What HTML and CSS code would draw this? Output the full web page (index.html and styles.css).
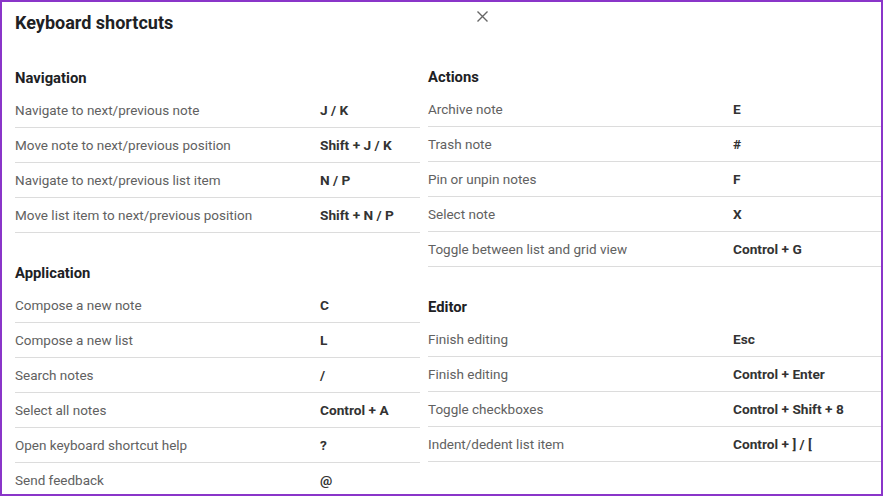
FILE: index.html
```html
<!DOCTYPE html>
<html lang="en">
<head>
<meta charset="utf-8">
<title>Keyboard shortcuts</title>
<link rel="stylesheet" href="styles.css">
</head>
<body>
<div class="frame">
  <header class="top">
    <h1 class="title">Keyboard shortcuts</h1>
    <button class="close" aria-label="Close">
      <svg width="11" height="11" viewBox="0 0 11 11"><path d="M0.5 0.5L10.5 10.5M10.5 0.5L0.5 10.5" stroke="#666" stroke-width="1.4" fill="none"/></svg>
    </button>
  </header>
  <div class="cols">
    <div class="col left">
      <section class="group">
        <h2 class="gh">Navigation</h2>
        <div class="row"><span class="lbl">Navigate to next/previous note</span><span class="key">J / K</span></div>
        <div class="row"><span class="lbl">Move note to next/previous position</span><span class="key">Shift + J / K</span></div>
        <div class="row"><span class="lbl">Navigate to next/previous list item</span><span class="key">N / P</span></div>
        <div class="row"><span class="lbl">Move list item to next/previous position</span><span class="key">Shift + N / P</span></div>
      </section>
      <section class="group">
        <h2 class="gh">Application</h2>
        <div class="row"><span class="lbl">Compose a new note</span><span class="key">C</span></div>
        <div class="row"><span class="lbl">Compose a new list</span><span class="key">L</span></div>
        <div class="row"><span class="lbl">Search notes</span><span class="key">/</span></div>
        <div class="row"><span class="lbl">Select all notes</span><span class="key">Control + A</span></div>
        <div class="row"><span class="lbl">Open keyboard shortcut help</span><span class="key">?</span></div>
        <div class="row"><span class="lbl">Send feedback</span><span class="key">@</span></div>
      </section>
    </div>
    <div class="col right">
      <section class="group">
        <h2 class="gh">Actions</h2>
        <div class="row"><span class="lbl">Archive note</span><span class="key">E</span></div>
        <div class="row"><span class="lbl">Trash note</span><span class="key">#</span></div>
        <div class="row"><span class="lbl">Pin or unpin notes</span><span class="key">F</span></div>
        <div class="row"><span class="lbl">Select note</span><span class="key">X</span></div>
        <div class="row"><span class="lbl">Toggle between list and grid view</span><span class="key">Control + G</span></div>
      </section>
      <section class="group">
        <h2 class="gh">Editor</h2>
        <div class="row"><span class="lbl">Finish editing</span><span class="key">Esc</span></div>
        <div class="row"><span class="lbl">Finish editing</span><span class="key">Control + Enter</span></div>
        <div class="row"><span class="lbl">Toggle checkboxes</span><span class="key">Control + Shift + 8</span></div>
        <div class="row"><span class="lbl">Indent/dedent list item</span><span class="key">Control + ] / [</span></div>
      </section>
    </div>
  </div>
</div>
</body>
</html>
```

FILE: styles.css
```css
html, body {
  margin: 0;
  padding: 0;
  background: #fff;
}
body {
  font-family: Roboto, "Liberation Sans", sans-serif;
  overflow: hidden;
}
.frame {
  box-sizing: border-box;
  width: 883px;
  height: 496px;
  border: 2px solid #8a35c9;
  padding: 0 0 0 13px;
  overflow: hidden;
  background: #fff;
}
.top {
  display: flex;
  align-items: flex-start;
  height: 63px;
}
.title {
  margin: 9px 0 0 0;
  font-size: 18px;
  line-height: 24px;
  font-weight: 700;
  color: #202124;
  width: 462px;
}
.close {
  margin: 9px 0 0 0;
  padding: 0;
  border: 0;
  background: none;
  width: 11px;
  height: 11px;
  display: flex;
}
.cols {
  display: grid;
  grid-template-columns: 405px 1fr;
  column-gap: 8px;
}
.right {
  margin-top: -1px;
}
.group + .group {
  margin-top: 27px;
}
.gh {
  margin: 0 0 3px 0;
  padding-top: 1px;
  height: 24px;
  line-height: 24px;
  font-size: 14.8px;
  font-weight: 700;
  color: #202124;
}
.row {
  display: grid;
  grid-template-columns: 305px 1fr;
  align-items: center;
  height: 34px;
  border-bottom: 1px solid #dcdcdc;
  font-size: 13.5px;
}
.lbl {
  color: #616161;
}
.key {
  color: #333;
  font-weight: 700;
  font-size: 13.7px;
}
```
